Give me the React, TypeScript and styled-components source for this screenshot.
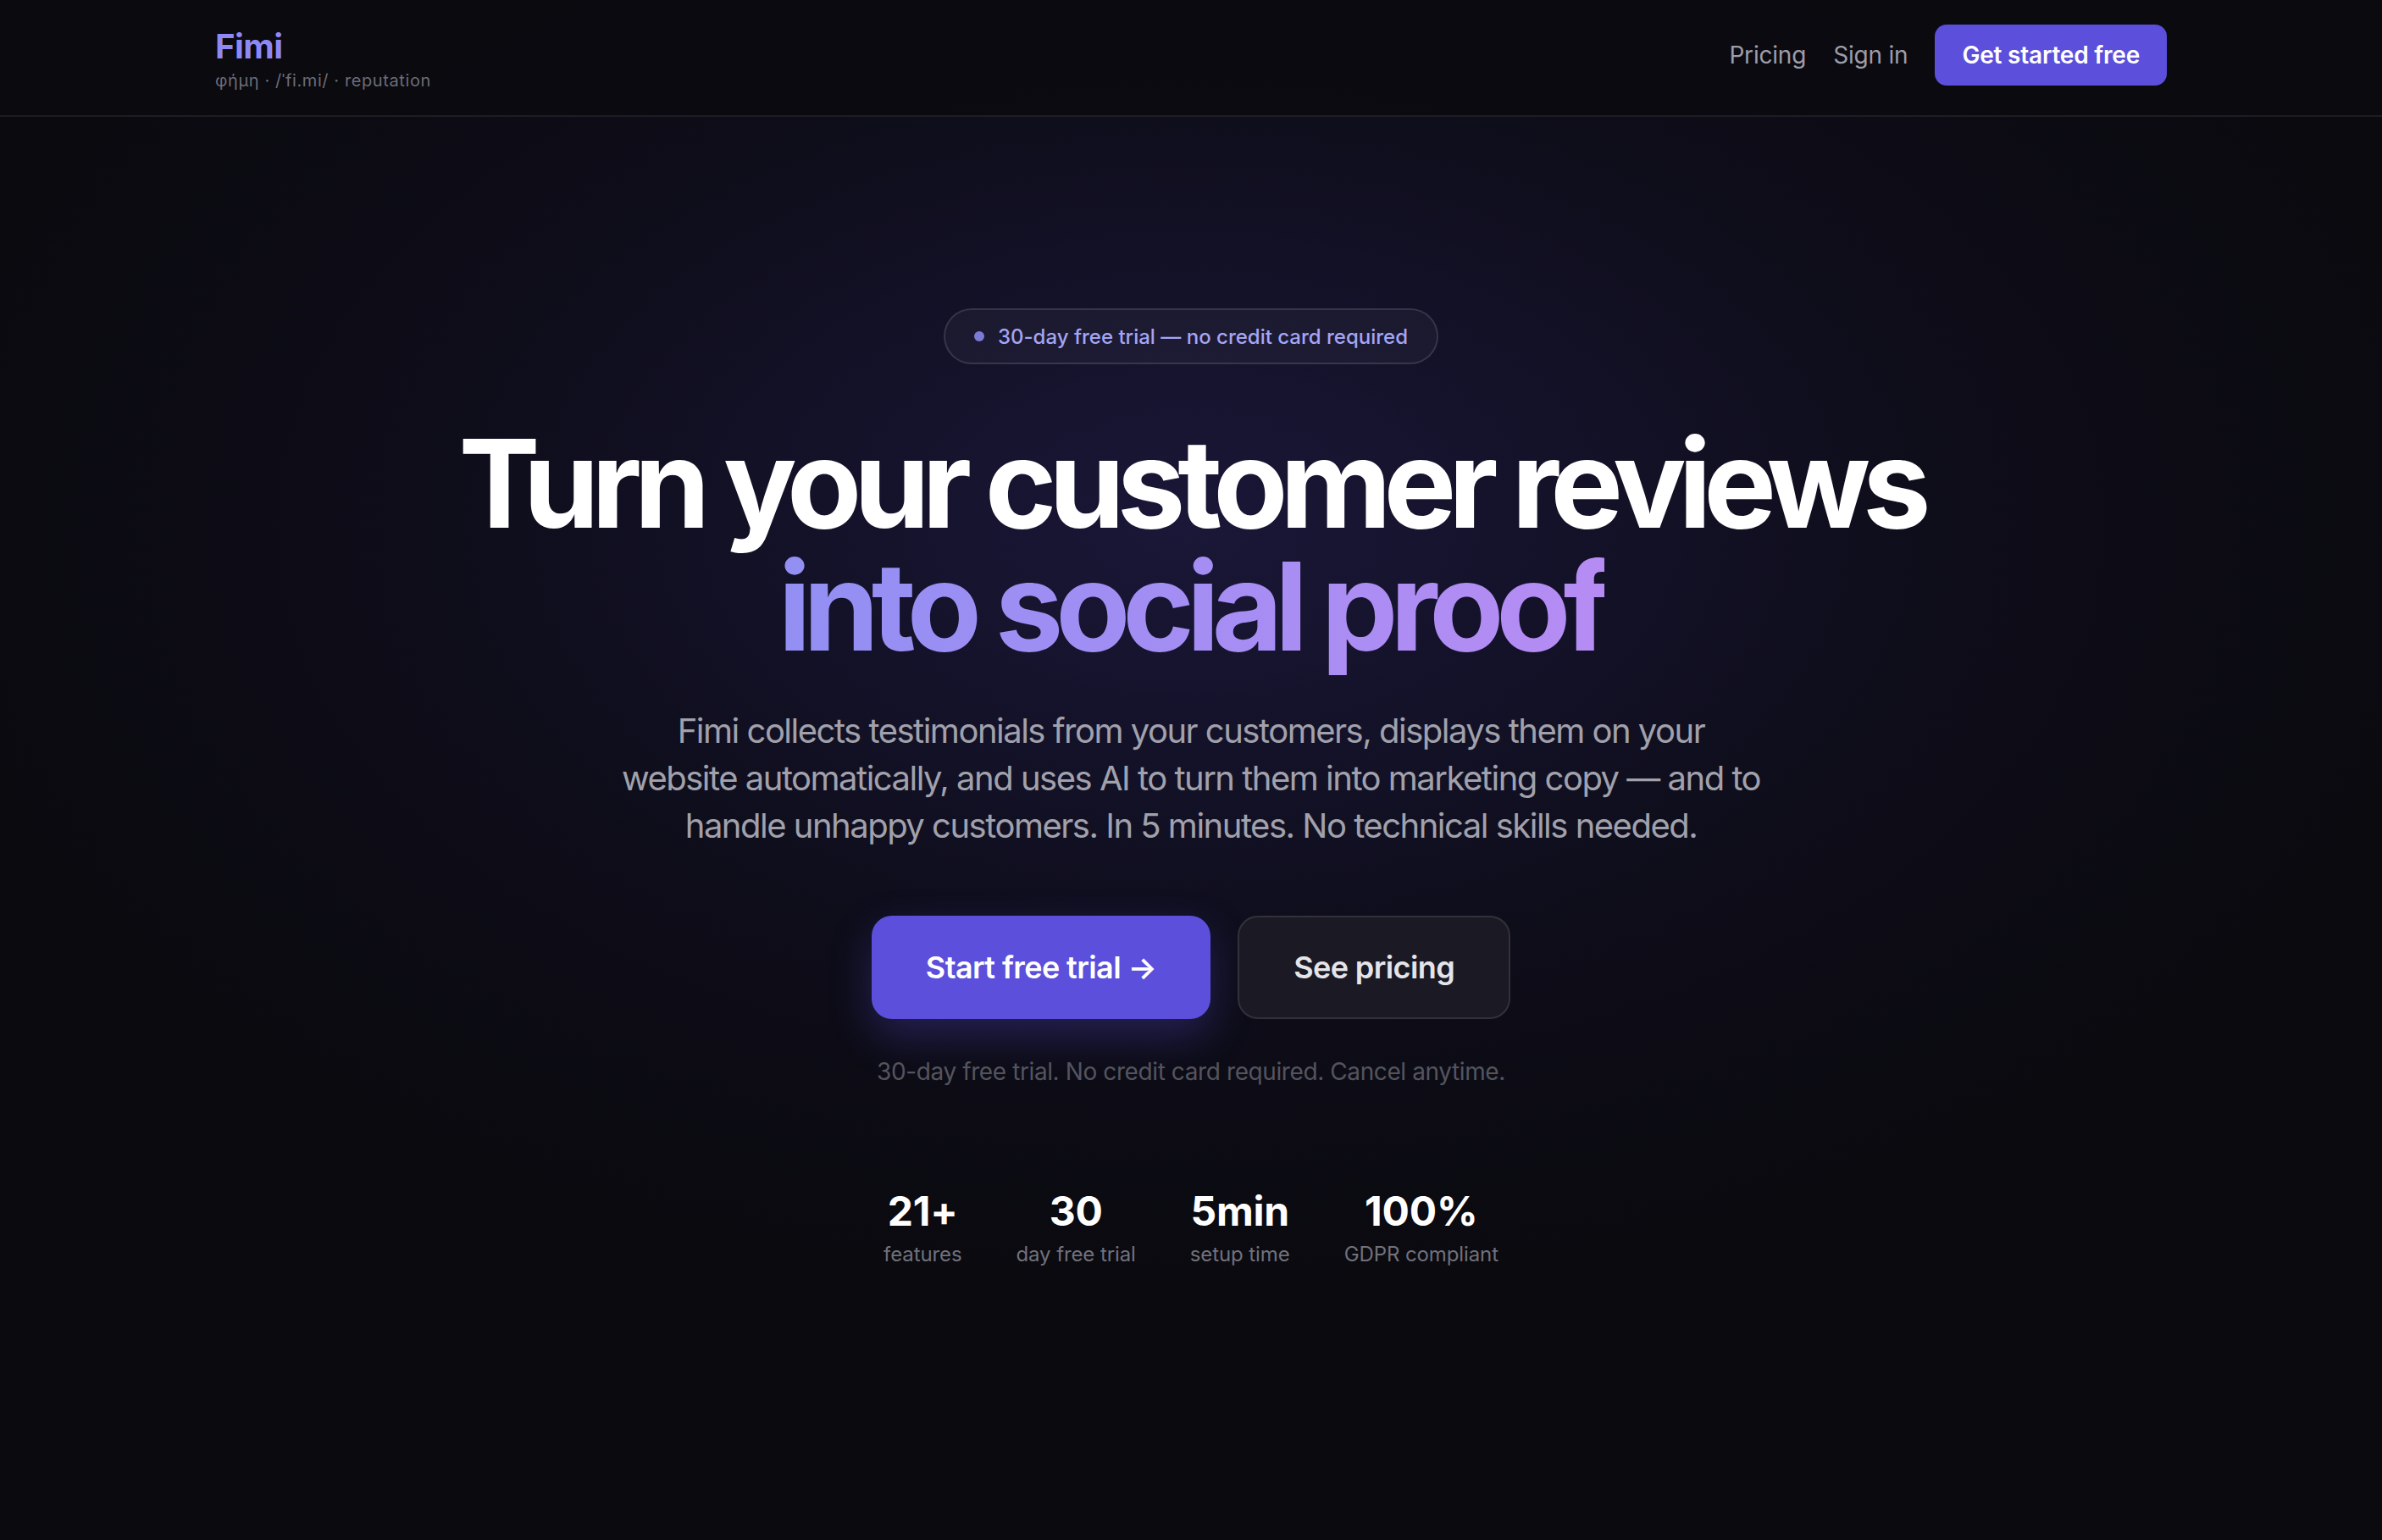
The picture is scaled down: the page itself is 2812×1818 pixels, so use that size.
import React from 'react';
import styled, { createGlobalStyle } from 'styled-components';

const GlobalStyle = createGlobalStyle`
  * {
    box-sizing: border-box;
  }

  body {
    margin: 0;
    background: #0a0a0f;
    font-family: 'Inter', 'Noto Sans', sans-serif;
    -webkit-font-smoothing: antialiased;
  }
`;

const Page = styled.div`
  min-height: 100vh;
  background:
    radial-gradient(ellipse 1500px 900px at 50% 620px, rgba(62, 52, 150, 0.3), rgba(40, 34, 100, 0.12) 60%, transparent 100%),
    #0a0a0f;
`;

const Header = styled.header`
  height: 138px;
  border-bottom: 2px solid #1d1d24;
  background: rgba(10, 10, 15, 0.85);
`;

const HeaderInner = styled.div`
  max-width: 2304px;
  height: 100%;
  margin: 0 auto;
  padding-top: 29px;
  display: flex;
  align-items: flex-start;
  justify-content: space-between;
`;

const Brand = styled.div`
  display: flex;
  flex-direction: column;
  gap: 3px;
  margin-top: 2px;
`;

const Logo = styled.span`
  font-size: 40px;
  line-height: 48px;
  font-weight: 700;
  color: #8d88f6;
  letter-spacing: -0.5px;
`;

const Tagline = styled.span`
  font-size: 20px;
  line-height: 26px;
  color: #6c6c78;
  letter-spacing: 0.6px;
`;

const Nav = styled.nav`
  display: flex;
  align-items: center;
  gap: 32px;
`;

const NavLink = styled.a`
  font-size: 28px;
  color: #9d9da8;
  text-decoration: none;
  letter-spacing: -0.2px;
  cursor: pointer;
`;

const HeaderCta = styled.button`
  height: 72px;
  padding: 0 32px;
  border: none;
  border-radius: 14px;
  background: #5b4fdb;
  color: #fff;
  font-family: inherit;
  font-size: 28px;
  font-weight: 600;
  letter-spacing: -0.2px;
  cursor: pointer;
`;

const Hero = styled.main`
  display: flex;
  flex-direction: column;
  align-items: center;
  padding-top: 226px;
  text-align: center;
`;

const Badge = styled.div`
  display: flex;
  align-items: center;
  gap: 16px;
  height: 66px;
  padding: 0 34px;
  border: 2px solid rgba(255, 255, 255, 0.12);
  border-radius: 999px;
  background: rgba(255, 255, 255, 0.035);
  color: #a4a5f4;
  font-size: 24px;
  font-weight: 500;
`;

const Dot = styled.span`
  width: 12px;
  height: 12px;
  border-radius: 50%;
  background: #7b7bd6;
`;

const Headline = styled.h1`
  margin: 68px 0 0;
  font-size: 144px;
  line-height: 1.01;
  font-weight: 700;
  letter-spacing: -0.064em;
  color: #fff;
`;

const Accent = styled.span`
  display: inline-block;
  background: linear-gradient(90deg, #928ff3 0%, #b68cf3 100%);
  -webkit-background-clip: text;
  background-clip: text;
  color: transparent;
  padding-bottom: 18px;
  margin-bottom: -18px;
`;

const Lead = styled.p`
  max-width: 1352px;
  margin: 46px 0 0;
  font-size: 40px;
  line-height: 56px;
  color: #a1a1ac;
  letter-spacing: -1.5px;
`;

const Actions = styled.div`
  display: flex;
  gap: 32px;
  margin-top: 78px;
`;

const HeroButton = styled.button<{ $primary?: boolean }>`
  height: 122px;
  padding: 0 64px;
  border-radius: 24px;
  font-family: inherit;
  font-size: 36px;
  font-weight: 600;
  letter-spacing: -0.6px;
  cursor: pointer;
  border: ${(p) => (p.$primary ? 'none' : '2px solid rgba(255, 255, 255, 0.1)')};
  background: ${(p) => (p.$primary ? '#5b4fdb' : '#1b1a24')};
  color: ${(p) => (p.$primary ? '#fff' : '#e4e4e9')};
  box-shadow: ${(p) => (p.$primary ? '0 20px 50px rgba(91, 79, 219, 0.3)' : 'none')};
`;

const FinePrint = styled.p`
  margin: 42px 0 0;
  font-size: 28px;
  line-height: 40px;
  color: #54545e;
  letter-spacing: -0.4px;
`;

const Stats = styled.div`
  display: flex;
  gap: 64px;
  margin-top: 113px;
`;

const Stat = styled.div`
  display: flex;
  flex-direction: column;
  align-items: center;
`;

const StatValue = styled.span`
  font-size: 48px;
  line-height: 64px;
  font-weight: 700;
  color: #fff;
  letter-spacing: -0.2px;
`;

const StatLabel = styled.span`
  margin-top: 3px;
  font-size: 24px;
  line-height: 32px;
  color: #71717c;
  letter-spacing: -0.1px;
`;

const stats = [
  { value: '21+', label: 'features' },
  { value: '30', label: 'day free trial' },
  { value: '5min', label: 'setup time' },
  { value: '100%', label: 'GDPR compliant' },
];

export default function App() {
  return (
    <Page>
      <GlobalStyle />
      <Header>
        <HeaderInner>
          <Brand>
            <Logo>Fimi</Logo>
            <Tagline>φήμη · /ˈfi.mi/ · reputation</Tagline>
          </Brand>
          <Nav>
            <NavLink>Pricing</NavLink>
            <NavLink>Sign in</NavLink>
            <HeaderCta>Get started free</HeaderCta>
          </Nav>
        </HeaderInner>
      </Header>

      <Hero>
        <Badge>
          <Dot />
          30-day free trial — no credit card required
        </Badge>

        <Headline>
          Turn your customer reviews
          <br />
          <Accent>into social proof</Accent>
        </Headline>

        <Lead>
          Fimi collects testimonials from your customers, displays them on your website
          automatically, and uses AI to turn them into marketing copy — and to handle unhappy
          customers. In 5 minutes. No technical skills needed.
        </Lead>

        <Actions>
          <HeroButton $primary>Start free trial →</HeroButton>
          <HeroButton>See pricing</HeroButton>
        </Actions>

        <FinePrint>30-day free trial. No credit card required. Cancel anytime.</FinePrint>

        <Stats>
          {stats.map((s) => (
            <Stat key={s.label}>
              <StatValue>{s.value}</StatValue>
              <StatLabel>{s.label}</StatLabel>
            </Stat>
          ))}
        </Stats>
      </Hero>
    </Page>
  );
}
